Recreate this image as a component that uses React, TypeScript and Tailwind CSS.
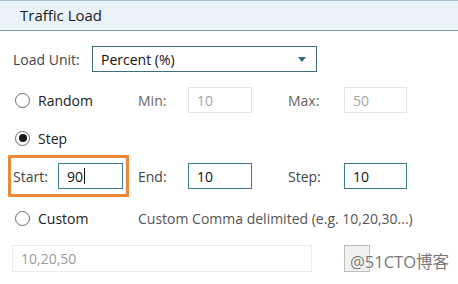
import React from "react";

const font = { fontFamily: '"Open Sans", "Noto Sans", "Noto Sans CJK SC", sans-serif' };

function Radio({ checked, label }: { checked?: boolean; label: string }) {
    return (
        <div className="flex items-center w-[125px] shrink-0">
            <span className="w-[15px] h-[15px] rounded-full border border-[#6b6b6b] bg-white flex items-center justify-center ml-[2px]">
                {checked && <span className="w-[8px] h-[8px] rounded-full bg-[#1a1a1a]" />}
            </span>
            <span className="ml-[8px] text-[#222]">{label}</span>
        </div>
    );
}

function Field({ value, active, width = "w-[64px]" }: { value: string; active?: boolean; width?: string }) {
    return (
        <div
            className={`${width} h-[26px] shrink-0 flex items-center pl-[8px] ${
                active ? "border border-[#3f7f8c] text-[#111]" : "border border-[#e4e4e4] text-[#a6a6a6]"
            }`}
        >
            {value}
        </div>
    );
}

export default function App() {
    return (
        <div className="w-[458px] h-[284px] bg-white text-[14px] relative overflow-hidden" style={font}>
            <div className="h-[31px] bg-[#ebf3fa] border-t border-t-[#a9c3d3] border-b border-b-[#7fa0a8] flex items-center pl-[20px] text-[#1a1a1a] text-[15px]">
                Traffic Load
            </div>

            <div className="flex items-center h-[26px] mt-[15px] pl-[13px]">
                <span className="w-[79px] text-[#444]">Load Unit:</span>
                <div className="w-[225px] h-[26px] border border-[#3d6e7a] flex items-center justify-between pl-[8px] pr-[10px] text-[#111]">
                    <span>Percent (%)</span>
                    <span className="w-0 h-0 border-l-[4px] border-r-[4px] border-t-[5px] border-l-transparent border-r-transparent border-t-[#2f6f80]" />
                </div>
            </div>

            <div className="flex items-center h-[26px] mt-[15px] pl-[13px]">
                <Radio label="Random" />
                <span className="w-[50px] text-[#666]">Min:</span>
                <Field value="10" />
                <span className="w-[36px]" />
                <span className="w-[56px] text-[#666]">Max:</span>
                <Field value="50" width="w-[63px]" />
            </div>

            <div className="flex items-center h-[26px] mt-[12px] pl-[13px]">
                <Radio checked label="Step" />
            </div>

            <div className="flex items-center h-[42px] mt-[4px] pl-[8px]">
                <div className="w-[121px] h-[42px] border-[3px] border-[#ec8a3c] flex items-center pl-[2px] shrink-0">
                    <span className="w-[45px] text-[#444]">Start:</span>
                    <div className="w-[65px] h-[26px] border border-[#3f7f8c] flex items-center pl-[8px] text-[#111]">
                        90<span className="w-px h-[16px] bg-[#111] ml-px" />
                    </div>
                </div>
                <span className="w-[50px] ml-[9px] text-[#444]">End:</span>
                <Field value="10" active />
                <span className="w-[36px]" />
                <span className="w-[56px] text-[#444]">Step:</span>
                <Field value="10" active width="w-[63px]" />
            </div>

            <div className="flex items-center h-[26px] mt-[8px] pl-[13px]">
                <Radio label="Custom" />
                <span className="text-[#555]">Custom Comma delimited (e.g. 10,20,30...)</span>
            </div>

            <div className="flex items-center h-[27px] mt-[14px] pl-[12px]">
                <div className="w-[300px] h-[27px] border border-[#ececec] flex items-center pl-[8px] text-[#9a9a9a]">
                    10,20,50
                </div>
                <div className="w-[26px] h-[27px] ml-[32px] bg-[#f0f0f0] border border-[#bdbdbd]" />
            </div>

            <div className="absolute left-[350px] top-[250px] text-[16.5px] text-[#777]" style={{ textShadow: "0 0 2px #fff, 0 0 2px #fff" }}>
                @51CTO博客
            </div>
        </div>
    );
}
